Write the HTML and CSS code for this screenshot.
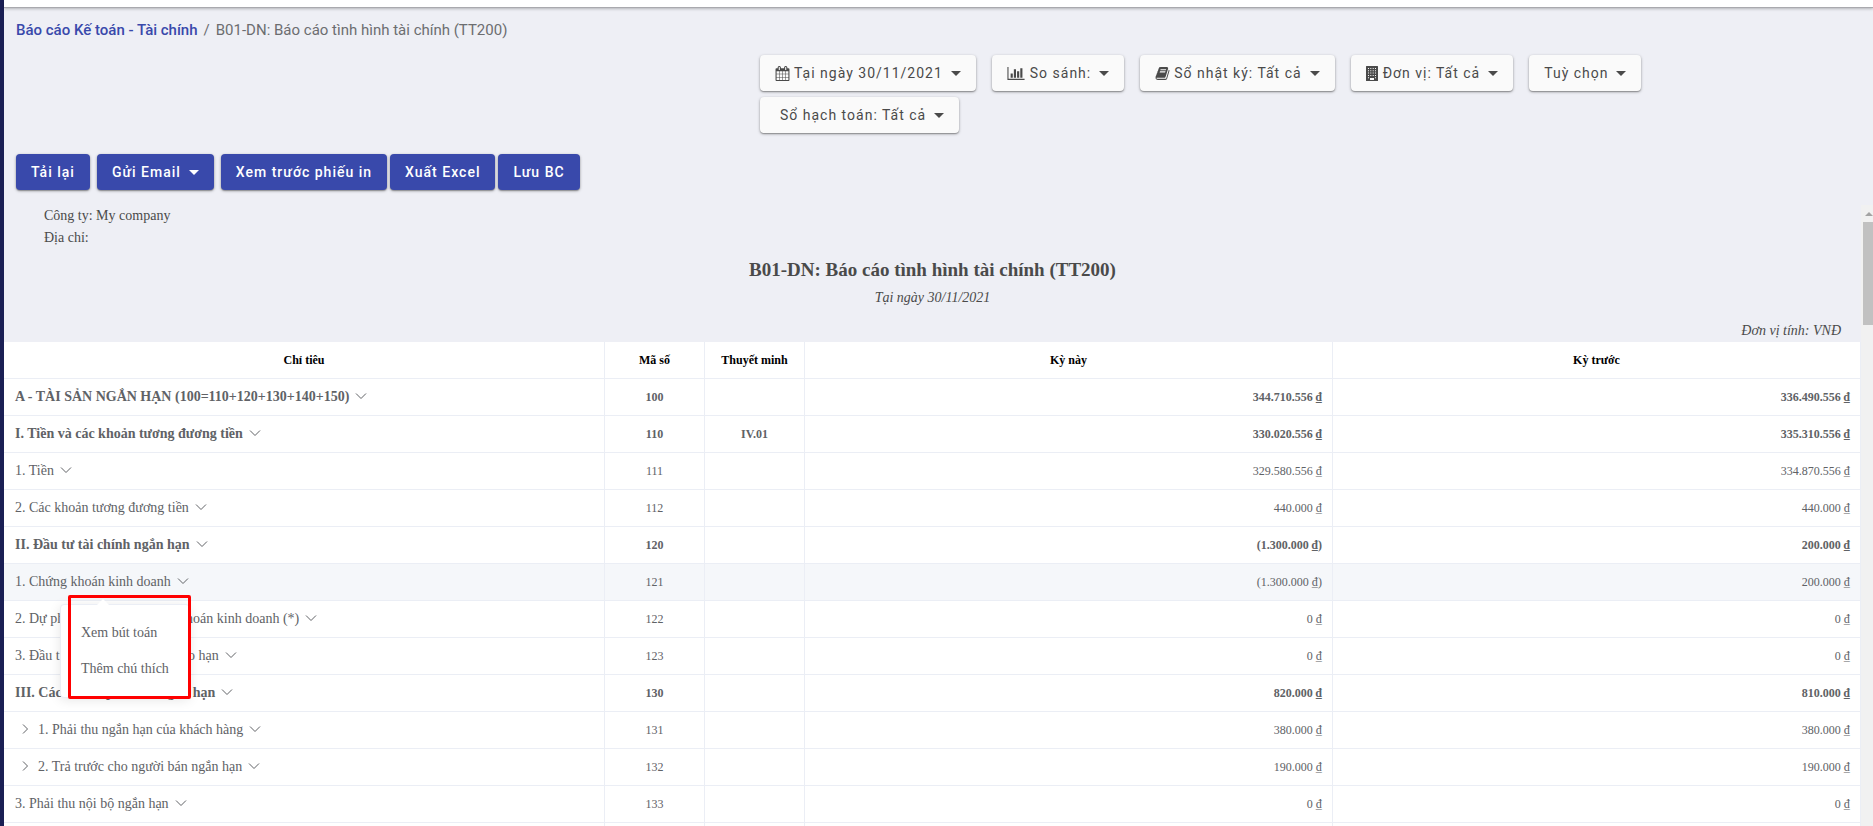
FILE: index.html
```html
<!DOCTYPE html>
<html lang="vi">
<head>
<meta charset="utf-8">
<title>B01-DN: Báo cáo tình hình tài chính (TT200)</title>
<link rel="stylesheet" href="styles.css">
</head>
<body>
<svg class="defs" aria-hidden="true">
  <symbol id="i-calendar" viewBox="0 0 1792 1792"><path d="M192 1664h288v-288h-288v288zm352 0h320v-288h-320v288zm-352-352h288v-320h-288v320zm352 0h320v-320h-320v320zm-352-384h288v-288h-288v288zm736 736h320v-288h-320v288zm-384-736h320v-288h-320v288zm768 736h288v-288h-288v288zm-384-352h320v-320h-320v320zm-352-864v-288q0-13-9.500-22.500t-22.500-9.500h-64q-13 0-22.500 9.500t-9.500 22.500v288q0 13 9.500 22.500t22.500 9.500h64q13 0 22.500-9.500t9.500-22.500zm736 864h288v-320h-288v320zm-384-384h320v-288h-320v288zm384 0h288v-288h-288v288zm32-480v-288q0-13-9.500-22.500t-22.500-9.500h-64q-13 0-22.500 9.500t-9.500 22.500v288q0 13 9.500 22.500t22.500 9.500h64q13 0 22.500-9.500t9.500-22.500zm384-64v1280q0 52-38 90t-90 38h-1408q-52 0-90-38t-38-90v-1280q0-52 38-90t90-38h128v-96q0-66 47-113t113-47h64q66 0 113 47t47 113v96h384v-96q0-66 47-113t113-47h64q66 0 113 47t47 113v96h128q52 0 90 38t38 90z"/></symbol>
  <symbol id="i-chart" viewBox="0 0 2048 1792"><path d="M640 896v512h-256v-512h256zm384-512v1024h-256v-1024h256zm1024 1152v128h-2048v-1536h128v1408h1920zm-640-896v768h-256v-768h256zm384-384v1152h-256v-1152h256z"/></symbol>
  <symbol id="i-book" viewBox="0 0 1792 1792"><path d="M1703 478q40 57 18 129l-275 906q-19 64-76.500 107.500t-122.500 43.500h-923q-77 0-148.500-53.500t-99.500-131.500q-24-67-2-127 0-4 3-27t4-37q1-8-3-21.500t-3-19.500q2-11 8-21t16.500-23.500 16.500-23.500q23-38 45-91.500t30-91.500q3-10 .5-30t-.5-28q3-11 17-28t17-23q21-36 42-92t25-90q1-9-2.500-32t.5-28q4-13 22-30.500t22-22.500q19-26 42.500-84.500t27.500-96.500q1-8-3-25.500t-2-26.500q2-8 9-18t18-23 17-21q8-12 16.500-30.500t15-35 16-36 19.500-32 26.500-23.500 36-11.500 47.500 5.500l-1 3q38-9 51-9h761q74 0 114 56t18 130l-274 906q-36 119-71.500 153.500t-128.500 34.500h-869q-27 0-38 15-11 16-1 43 24 70 144 70h923q29 0 56-15.500t35-41.500l300-987q7-22 5-57 38 15 59 43zm-1064 2q-4 13 2 22.500t20 9.500h608q13 0 25.500-9.500t16.500-22.500l21-64q4-13-2-22.500t-20-9.500h-608q-13 0-25.500 9.500t-16.500 22.500zm-83 256q-4 13 2 22.500t20 9.500h608q13 0 25.500-9.500t16.500-22.500l21-64q4-13-2-22.500t-20-9.500h-608q-13 0-25.500 9.500t-16.500 22.500z"/></symbol>
  <symbol id="i-building" viewBox="0 0 12 15"><path fill-rule="evenodd" d="M0 .5Q0 0 .5 0h11q.5 0 .5.500v14q0 .5-.5.500H.5Q0 15 0 14.500zM2 2v1h1V2zm2.300 0v1h1V2zm2.400 0v1h1V2zM9 2v1h1V2zM2 4.300v1h1v-1zm2.300 0v1h1v-1zm2.400 0v1h1v-1zm2.300 0v1h1v-1zM2 6.600v1h1v-1zm2.300 0v1h1v-1zm2.400 0v1h1v-1zm2.300 0v1h1v-1zM2 9v1h1V9zm2.300 0v1h1V9zm2.400 0v1h1V9zM9 9v1h1V9zM2 11.300v1h1v-1zm7 0v1h1v-1zM4 12v2h4v-2z"/></symbol>
  <symbol id="i-down" viewBox="0 0 14 14"><path d="M2 4.500l5 5 5-5" fill="none" stroke="currentColor"/></symbol>
  <symbol id="i-right" viewBox="0 0 12 12"><path d="M4 1.500L8.500 6 4 10.500" fill="none" stroke="currentColor"/></symbol>
</svg>
<div class="app">
  <div class="rail"></div>
  <div class="page">
    <header class="topbar"></header>
    <nav class="crumbs" aria-label="Breadcrumb">
      <a href="#">Báo cáo Kế toán - Tài chính</a><span class="sep">/</span><span>B01-DN: Báo cáo tình hình tài chính (TT200)</span>
    </nav>
    <div class="filters">
      <button class="btn filter"><svg class="ico"><use href="#i-calendar"/></svg>Tại ngày 30/11/2021<i class="caret"></i></button>
      <button class="btn filter"><svg class="ico wide"><use href="#i-chart"/></svg>So sánh:<i class="caret"></i></button>
      <button class="btn filter"><svg class="ico"><use href="#i-book"/></svg>Sổ nhật ký: Tất cả<i class="caret"></i></button>
      <button class="btn filter"><svg class="ico slim"><use href="#i-building"/></svg>Đơn vị: Tất cả<i class="caret"></i></button>
      <button class="btn filter">Tuỳ chọn<i class="caret"></i></button>
      <button class="btn filter indent">Sổ hạch toán: Tất cả<i class="caret"></i></button>
    </div>
    <div class="actions">
      <button class="btn primary">Tải lại</button>
      <button class="btn primary">Gửi Email<i class="caret"></i></button>
      <div class="group">
        <button class="btn primary">Xem trước phiếu in</button>
        <button class="btn primary">Xuất Excel</button>
        <button class="btn primary">Lưu BC</button>
      </div>
    </div>
    <div class="viewport">
      <main class="report">
        <div class="company"><div>Công ty: My company</div><div>Địa chỉ:</div></div>
        <h1 class="title">B01-DN: Báo cáo tình hình tài chính (TT200)</h1>
        <p class="date">Tại ngày 30/11/2021</p>
        <p class="unit">Đơn vị tính: VNĐ</p>
        <table class="grid">
          <colgroup><col class="c-name"><col class="c-code"><col class="c-code"><col><col></colgroup>
          <thead><tr><th>Chỉ tiêu</th><th>Mã số</th><th>Thuyết minh</th><th>Kỳ này</th><th>Kỳ trước</th></tr></thead>
          <tbody>
            <tr class="strong"><td>A - TÀI SẢN NGẮN HẠN (100=110+120+130+140+150)<svg class="down"><use href="#i-down"/></svg></td><td>100</td><td></td><td>344.710.556 ₫</td><td>336.490.556 ₫</td></tr>
            <tr class="strong"><td>I. Tiền và các khoản tương đương tiền<svg class="down"><use href="#i-down"/></svg></td><td>110</td><td>IV.01</td><td>330.020.556 ₫</td><td>335.310.556 ₫</td></tr>
            <tr><td>1. Tiền<svg class="down"><use href="#i-down"/></svg></td><td>111</td><td></td><td>329.580.556 ₫</td><td>334.870.556 ₫</td></tr>
            <tr><td>2. Các khoản tương đương tiền<svg class="down"><use href="#i-down"/></svg></td><td>112</td><td></td><td>440.000 ₫</td><td>440.000 ₫</td></tr>
            <tr class="strong"><td>II. Đầu tư tài chính ngắn hạn<svg class="down"><use href="#i-down"/></svg></td><td>120</td><td></td><td>(1.300.000 ₫)</td><td>200.000 ₫</td></tr>
            <tr class="hover"><td class="anchor">1. Chứng khoán kinh doanh<svg class="down"><use href="#i-down"/></svg>
              <div class="menu"><button class="item">Xem bút toán</button><button class="item">Thêm chú thích</button><div class="mark"></div></div></td><td>121</td><td></td><td>(1.300.000 ₫)</td><td>200.000 ₫</td></tr>
            <tr><td>2. Dự phòng giảm giá chứng khoán kinh doanh (*)<svg class="down"><use href="#i-down"/></svg></td><td>122</td><td></td><td>0 ₫</td><td>0 ₫</td></tr>
            <tr><td>3. Đầu tư nắm giữ đến ngày đáo hạn<svg class="down"><use href="#i-down"/></svg></td><td>123</td><td></td><td>0 ₫</td><td>0 ₫</td></tr>
            <tr class="strong"><td>III. Các khoản phải thu ngắn hạn<svg class="down"><use href="#i-down"/></svg></td><td>130</td><td></td><td>820.000 ₫</td><td>810.000 ₫</td></tr>
            <tr><td><svg class="right"><use href="#i-right"/></svg>1. Phải thu ngắn hạn của khách hàng<svg class="down"><use href="#i-down"/></svg></td><td>131</td><td></td><td>380.000 ₫</td><td>380.000 ₫</td></tr>
            <tr><td><svg class="right"><use href="#i-right"/></svg>2. Trả trước cho người bán ngắn hạn<svg class="down"><use href="#i-down"/></svg></td><td>132</td><td></td><td>190.000 ₫</td><td>190.000 ₫</td></tr>
            <tr><td>3. Phải thu nội bộ ngắn hạn<svg class="down"><use href="#i-down"/></svg></td><td>133</td><td></td><td>0 ₫</td><td>0 ₫</td></tr>
            <tr><td></td><td></td><td></td><td></td><td></td></tr>
          </tbody>
        </table>
      </main>
      <div class="scroll"><i class="up"></i><div class="thumb"></div></div>
    </div>
  </div>
</div>
</body>
</html>
```
FILE: styles.css
```css
* { box-sizing: border-box; }
body { margin: 0; background: #eeeff5; overflow: hidden; font-family: Roboto, "Liberation Sans", sans-serif; }
.defs { display: none; }
.app { display: flex; height: 100vh; }
.rail { flex: none; width: 4px; background: #1a1f54; }
.page { flex: 1; min-width: 0; display: flex; flex-direction: column; }
.topbar { flex: none; height: 8px; background: #fff; border-bottom: 1px solid #a9a9ae; box-shadow: 0 1px 3px rgba(0,0,0,.25); }

.crumbs { padding: 12px 12px 0; font-size: 15px; line-height: 20px; color: #6c6d70; }
.crumbs a { color: #3949ab; text-decoration: none; font-weight: 500; }
.sep { padding: 0 6px; }

.btn { display: inline-flex; align-items: center; height: 36px; padding: 0 15px; border: 0; border-radius: 4px; font-family: inherit; font-size: 14px; line-height: 20px; letter-spacing: 1px; white-space: nowrap; box-shadow: 0 1px 3px rgba(0,0,0,.35), 0 1px 1px rgba(0,0,0,.2); }
.filter { background: #fafafa; color: #4a4a4a; }
.indent { padding-left: 20px; }
.primary { background: #3949ab; color: #fff; font-weight: 500; }
.caret { margin-left: 8px; border: 5px solid transparent; border-top-color: currentColor; border-bottom: 0; }
.ico { width: 15px; height: 15px; margin-right: 4px; fill: currentColor; }
.ico.wide { width: 18px; margin-right: 5px; }
.ico.slim { width: 12px; margin-right: 5px; }
.filters { display: flex; flex-wrap: wrap; gap: 6px 16px; padding: 15px 220px 0 756px; }
.actions { display: flex; gap: 7px; padding: 21px 12px 0; }
.group { display: flex; gap: 3px; }

.viewport { flex: 1; min-height: 0; display: flex; padding-top: 15px; }
.report { flex: 1; min-width: 0; overflow: hidden; font-family: "Liberation Serif", serif; font-size: 14px; line-height: 22px; color: #4a4a4a; }
.report p { margin: 0; font-style: italic; }
.company { padding: 0 40px; }
.title { margin: 7px 0 0; font-size: 19px; line-height: 28px; text-align: center; }
.date { padding-top: 3px; text-align: center; }
.report .unit { margin-top: 11px; padding-right: 20px; text-align: right; }
.grid { width: 100%; table-layout: fixed; border-collapse: separate; border-spacing: 0; background: #fff; color: #606266; }
.c-name { width: 601px; }
.c-code { width: 100px; }
.grid th, .grid td { height: 37px; padding: 0 10px; border-right: 1px solid #ebeef5; border-bottom: 1px solid #ebeef5; font-size: 12px; line-height: 22px; text-align: center; white-space: nowrap; }
.grid th { color: #000; }
.grid td:first-child { padding-left: 11px; font-size: 14px; text-align: left; }
.grid td:nth-child(n+4) { text-align: right; }
.strong td { font-weight: 700; }
.hover td { background: #f5f7fa; }
.down { width: 14px; height: 14px; margin-left: 5px; vertical-align: -2px; }
.right { width: 12px; height: 12px; margin: 0 7px 0 4px; vertical-align: -1px; }

.anchor { position: relative; }
.menu { position: absolute; z-index: 2; top: 40px; left: 56px; display: flex; flex-direction: column; padding: 10px 0; background: #fff; border: 1px solid #ebeef5; border-radius: 4px; box-shadow: 0 2px 12px rgba(0,0,0,.1); }
.menu::before { content: ""; position: absolute; top: -6px; left: 36px; border: 6px solid transparent; border-top: 0; border-bottom-color: #fff; }
.item { padding: 0 20px; border: 0; background: none; font: inherit; line-height: 36px; color: #606266; text-align: left; }
.mark { position: absolute; inset: -10px -2px -2px 7px; border: 3px solid #f00; border-radius: 2px; pointer-events: none; }

.scroll { flex: none; display: flex; flex-direction: column; align-items: flex-end; gap: 6px; width: 12px; padding-top: 7px; background: #f1f1f1; }
.up { border: 4px solid transparent; border-top: 0; border-bottom-color: #a3a3a3; }
.thumb { width: 10px; height: 103px; background: #c1c1c1; }
```
